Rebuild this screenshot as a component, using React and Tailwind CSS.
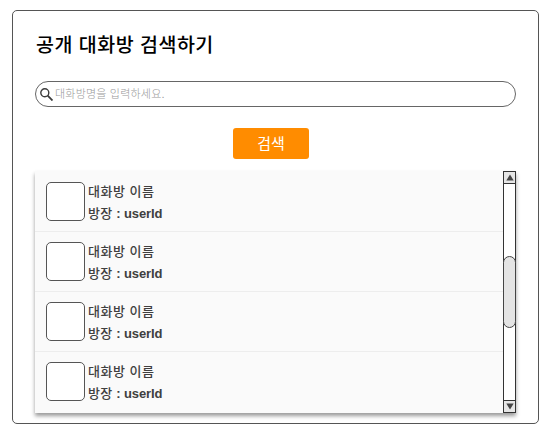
const rooms = [1, 2, 3, 4].map((id) => ({ id, name: '대화방 이름', owner: 'userId' }));

function SearchIcon() {
  return (
    <svg width="13" height="13" viewBox="0 0 13 13" fill="none" stroke="#3c3c3c" className="shrink-0">
      <circle cx="4.8" cy="4.8" r="4" strokeWidth="1.4" />
      <path d="M7.7 7.7L12.5 12.5" strokeWidth="1.8" />
    </svg>
  );
}

function ScrollButton({ down }) {
  return (
    <div className="flex h-[13px] w-full shrink-0 items-center justify-center border border-[#333] bg-[#e6e6e6]">
      <svg width="8" height="7" viewBox="0 0 8 7" fill="#444" className="shrink-0">
        <path d={down ? 'M0.3 0.5h7.4L4 6.5z' : 'M0.3 6.5h7.4L4 0.5z'} />
      </svg>
    </div>
  );
}

function Scrollbar() {
  return (
    <div className="flex w-[13px] shrink-0 flex-col bg-white">
      <ScrollButton />
      <div className="flex-1 border-x border-[#333] pt-[72px]">
        <div className="-mx-px h-[72px] rounded-full border border-[#444] bg-[#e4e4e4]" />
      </div>
      <ScrollButton down />
    </div>
  );
}

function RoomRow({ room }) {
  return (
    <li className="flex h-[60px] border-b border-[#ededed] pt-[11px] pl-[11px] first:h-[61px] last:border-b-0 not-first:pt-[10px]">
      <div className="h-[39px] w-[39px] shrink-0 rounded-[5px] border border-[#555] bg-white" />
      <div className="-mt-px pl-[3px] text-[13px] leading-[22px] text-[#404040]">
        <p className="font-medium tracking-[0.5px]">{room.name}</p>
        <p className="font-bold tracking-[-0.1px]">
          <span className="font-medium tracking-[0.4px]">방장</span> : {room.owner}
        </p>
      </div>
    </li>
  );
}

export default function App() {
  return (
    <div className="h-[437px] w-[553px] bg-white pt-[10px] pl-[12px] font-['Liberation_Sans','Noto_Sans_CJK_KR',sans-serif]">
      <main className="flex h-[414px] w-[527px] flex-col rounded-[5px] border border-[#555] pl-[22px]">
        <h1 className="mt-[20px] h-[28px] pl-px text-[19.5px] leading-[28px] font-medium tracking-[0.5px] text-black">
          공개 대화방 검색하기
        </h1>
        <label className="mt-[22px] flex h-[26px] w-[481px] items-center rounded-full border border-[#666] pl-[4px]">
          <SearchIcon />
          <input
            className="-mt-px ml-[2px] h-[22px] w-[400px] text-[11px] font-light tracking-[0.2px] outline-none placeholder:text-[#999]"
            placeholder="대화방명을 입력하세요."
          />
        </label>
        <button className="mt-[21px] ml-[198px] flex h-[31px] w-[76px] items-center justify-center rounded-[3px] bg-[#ff8c00] pt-px text-[15px] text-white">
          검색
        </button>
        <section className="mt-[12px] flex h-[242px] w-[481px] bg-[#fafafa] shadow-[0_3px_4px_rgba(0,0,0,0.4)]">
          <ul className="flex-1">
            {rooms.map((room) => (
              <RoomRow key={room.id} room={room} />
            ))}
          </ul>
          <Scrollbar />
        </section>
      </main>
    </div>
  );
}
